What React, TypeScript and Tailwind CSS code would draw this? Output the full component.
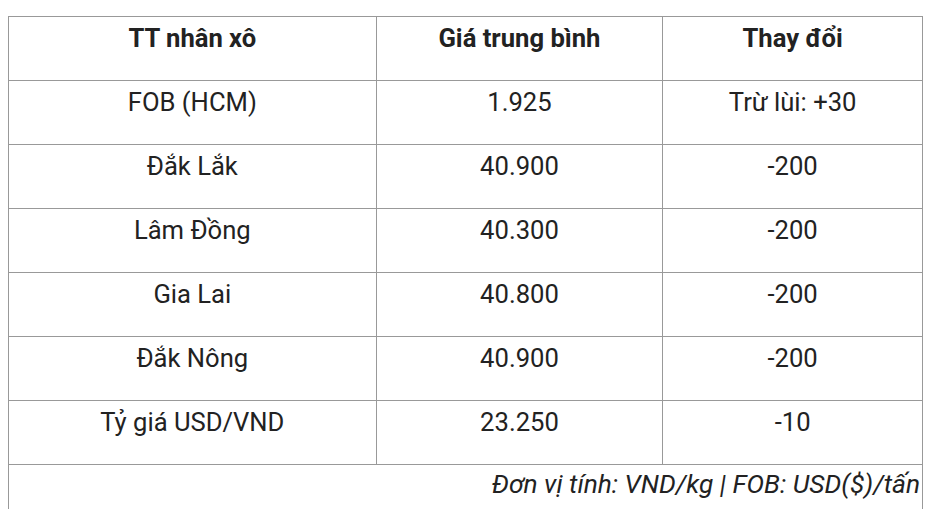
import React from "react";

const rows = [
  ["FOB (HCM)", "1.925", "Trừ lùi: +30"],
  ["Đắk Lắk", "40.900", "-200"],
  ["Lâm Đồng", "40.300", "-200"],
  ["Gia Lai", "40.800", "-200"],
  ["Đắk Nông", "40.900", "-200"],
  ["Tỷ giá USD/VND", "23.250", "-10"],
];

const App = () => {
  return (
    <div className="bg-white w-[928px] h-[509px] overflow-hidden pl-2 pt-4 text-[#222] font-['Roboto',sans-serif]">
      <table className="border-collapse w-[915px] text-[25.6px] leading-[37px]">
        <colgroup>
          <col className="w-[368px]" />
          <col className="w-[287px]" />
          <col className="w-[260px]" />
        </colgroup>
        <thead>
          <tr className="h-16">
            <th className="border border-[#999] align-top pt-[3px] font-bold text-center">TT nhân xô</th>
            <th className="border border-[#999] align-top pt-[3px] font-bold text-center">Giá trung bình</th>
            <th className="border border-[#999] align-top pt-[3px] font-bold text-center">Thay đổi</th>
          </tr>
        </thead>
        <tbody>
          {rows.map((r) => (
            <tr key={r[0]} className="h-16">
              {r.map((c, i) => (
                <td key={i} className="border border-[#999] align-top pt-[3px] text-center">
                  {c}
                </td>
              ))}
            </tr>
          ))}
          <tr className="h-16">
            <td colSpan={3} className="border border-[#999] align-top pt-[1px] pr-[2px] text-right italic text-[26.3px]">
              Đơn vị tính: VND/kg | FOB: USD($)/tấn
            </td>
          </tr>
        </tbody>
      </table>
    </div>
  );
};

export default App;
